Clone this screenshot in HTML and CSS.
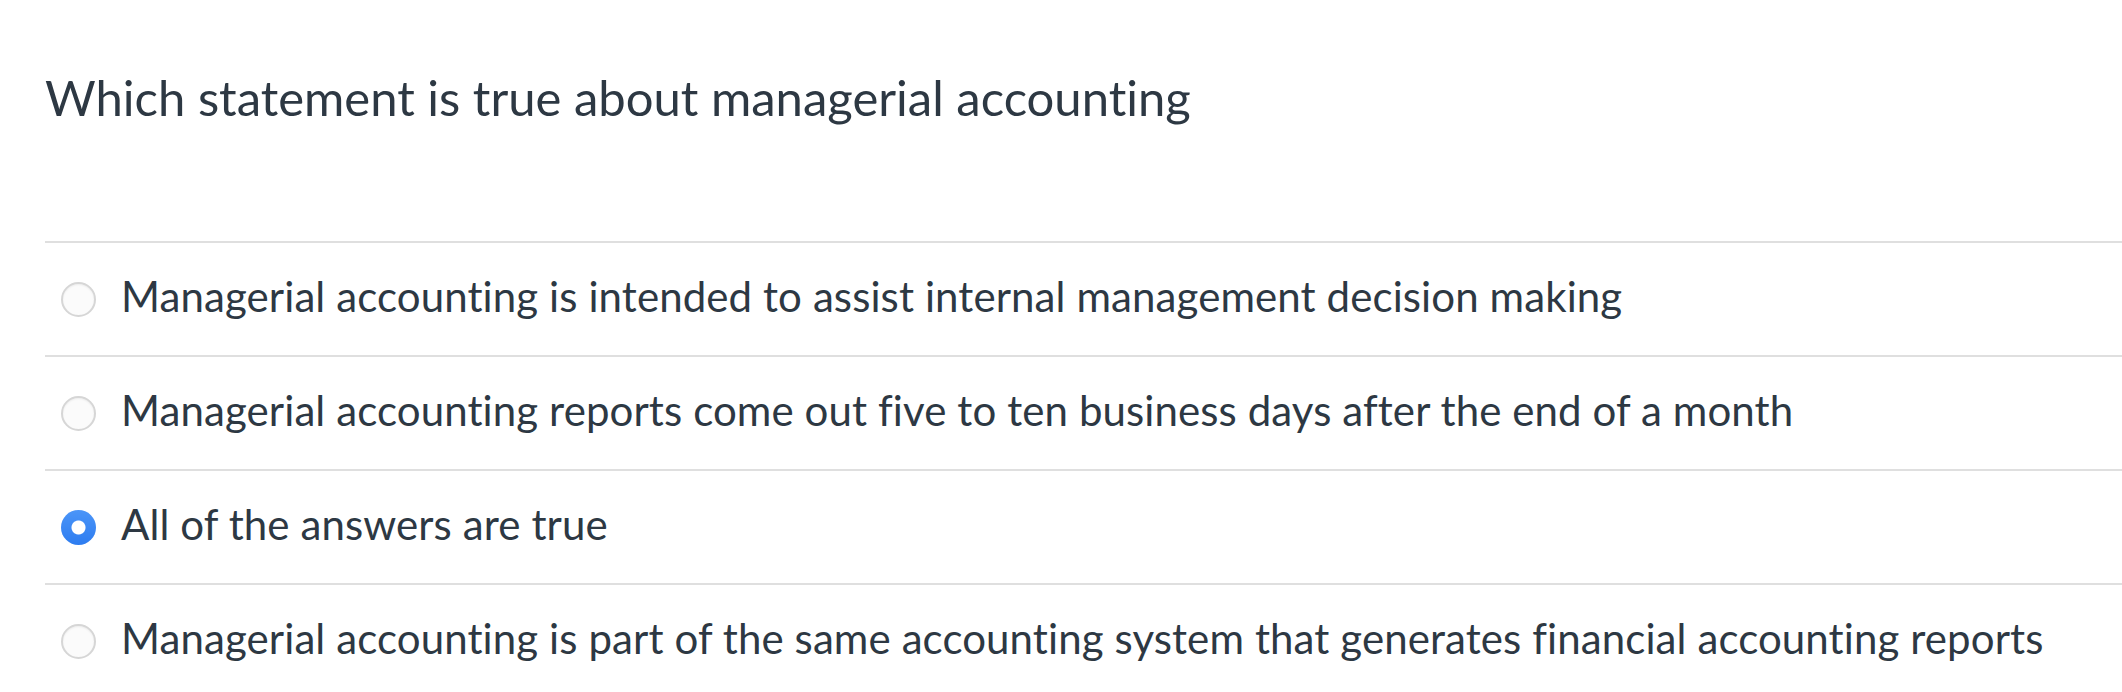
FILE: index.html
```html
<!DOCTYPE html>
<html lang="en">
<head>
<meta charset="utf-8">
<title>Question</title>
<link rel="stylesheet" href="styles.css">
</head>
<body>
<div class="question">
  <h1 class="prompt">Which statement is true about managerial accounting</h1>
  <ul class="choices">
    <li class="choice"><span class="radio"></span><span class="label">Managerial accounting is intended to assist internal management decision making</span></li>
    <li class="choice"><span class="radio"></span><span class="label">Managerial accounting reports come out five to ten business days after the end of a month</span></li>
    <li class="choice"><span class="radio checked"></span><span class="label">All of the answers are true</span></li>
    <li class="choice"><span class="radio"></span><span class="label">Managerial accounting is part of the same accounting system that generates financial accounting reports</span></li>
  </ul>
</div>
</body>
</html>
```
FILE: styles.css
```css
html, body {
  margin: 0;
  padding: 0;
  background: #ffffff;
}
body {
  font-family: "Lato", "Open Sans", sans-serif;
  color: #2d3843;
  overflow: hidden;
  font-variant-ligatures: none;
}
.question {
  padding-left: 45px;
}
.prompt {
  margin: 0;
  padding-top: 68px;
  font-size: 49px;
  font-weight: 400;
  line-height: 58px;
}
.choices {
  list-style: none;
  margin: 115px 0 0 0;
  padding: 0;
}
.choice {
  display: flex;
  align-items: center;
  height: 112px;
  border-top: 2px solid #dfdfdf;
}
.radio {
  box-sizing: border-box;
  flex: none;
  width: 35px;
  height: 35px;
  margin-left: 16px;
  margin-right: 25px;
  border-radius: 50%;
  border: 2px solid #d6d6d6;
  background: #fbfbfb;
  box-shadow: inset 0 1px 2px rgba(0,0,0,0.06);
}
.radio.checked {
  border: none;
  background: radial-gradient(circle, #ffffff 0, #ffffff 6.5px, transparent 7.5px), linear-gradient(#4b95f8, #2d7cf0);
  box-shadow: none;
}
.label {
  font-size: 42px;
  line-height: 50px;
  padding-bottom: 6px;
  letter-spacing: 0.1px;
}
```
